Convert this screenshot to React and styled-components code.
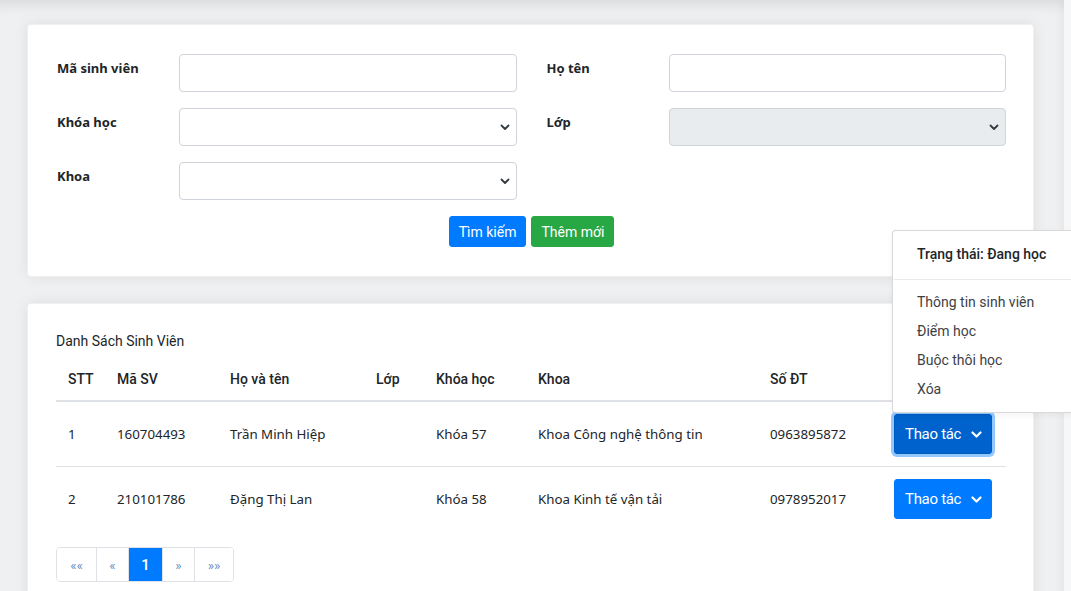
import React from 'react';
import styled, { createGlobalStyle, css } from 'styled-components';

const GlobalStyle = createGlobalStyle`
  html, body {
    margin: 0;
    padding: 0;
    background: #eff0f1;
    overflow: hidden;
  }
  body {
    font-family: Roboto, "Noto Sans", sans-serif;
    color: #212529;
  }
  * { box-sizing: border-box; }
`;

const Page = styled.div`
  display: flex;
  min-height: 100vh;
`;

const Main = styled.main`
  flex: 1;
  padding: 24px 30px 0 27px;
  box-shadow: inset 0 16px 14px -12px rgba(0, 0, 0, 0.1);
`;

const RightStrip = styled.aside`
  width: 7px;
  flex: none;
  background: #f7f7f7;
  box-shadow: -3px 0 8px rgba(0, 0, 0, 0.05);
`;

const Card = styled.section`
  background: #fff;
  border: 1px solid rgba(0, 0, 0, 0.06);
  border-radius: 4px;
  box-shadow: 0 0 14px rgba(0, 0, 0, 0.08);
  padding: ${p => p.$pad};
  & + & {
    margin-top: 26px;
  }
`;

const FormGrid = styled.div`
  display: grid;
  grid-template-columns: 1fr 1fr;
  column-gap: 30px;
  row-gap: 16px;
`;

const Field = styled.div`
  display: flex;
  align-items: flex-start;
`;

const Label = styled.label`
  width: 122px;
  flex: none;
  padding-top: 4px;
  font-family: "Noto Sans", sans-serif;
  font-weight: 700;
  font-size: 13px;
  line-height: 20px;
  color: #212529;
`;

const boxBase = css`
  flex: 1;
  height: 38px;
  border: 1px solid #ced4da;
  border-radius: 4px;
  background: ${p => (p.$disabled ? '#e9ecef' : '#fff')};
`;

const Input = styled.input`
  ${boxBase};
  outline: none;
  padding: 6px 12px;
  font-size: 14px;
`;

const SelectBox = styled.div`
  ${boxBase};
  display: flex;
  align-items: center;
  justify-content: flex-end;
  padding-right: 6px;
  color: #343a40;
`;

const Actions = styled.div`
  display: flex;
  justify-content: center;
  gap: 5px;
  margin-top: 16px;
`;

const Button = styled.button`
  height: 31px;
  padding: 0 9px;
  border: 1px solid ${p => p.$bg};
  border-radius: 3px;
  background: ${p => p.$bg};
  color: #fff;
  font-family: Roboto, sans-serif;
  font-size: 14px;
`;

const Title = styled.h2`
  margin: 0 0 6px;
  font-family: Roboto, sans-serif;
  font-weight: 400;
  font-size: 14px;
  line-height: 20px;
  color: #212529;
`;

const Table = styled.table`
  width: 100%;
  border-collapse: collapse;
  table-layout: fixed;
`;

const Th = styled.th`
  width: ${p => p.$w || 'auto'};
  padding: 12px 12px 10px;
  text-align: left;
  font-family: Roboto, sans-serif;
  font-weight: 500;
  font-size: 14px;
  line-height: 21px;
  border-bottom: 2px solid #dee2e6;
`;

const Td = styled.td`
  padding: 12px;
  vertical-align: middle;
  font-family: "Noto Sans", sans-serif;
  font-size: 13.3px;
  line-height: 21px;
  color: #212529;
  border-bottom: 1px solid #dee2e6;
  white-space: nowrap;
`;

const Row = styled.tr`
  &:last-child td {
    border-bottom: none;
  }
`;

const ActionWrap = styled.div`
  position: relative;
  display: inline-block;
`;

const ActionButton = styled.button`
  display: inline-flex;
  align-items: center;
  gap: 10px;
  height: 40px;
  width: 98px;
  padding: 0 0 0 10px;
  border: 1px solid ${p => (p.$focused ? '#005cbf' : '#007bff')};
  border-radius: 3px;
  background: ${p => (p.$focused ? '#0062cc' : '#007bff')};
  box-shadow: ${p => (p.$focused ? '0 0 0 3px rgba(38, 143, 255, 0.5)' : 'none')};
  color: #fff;
  font-family: Roboto, sans-serif;
  font-size: 15px;
  letter-spacing: -0.3px;
`;

const Menu = styled.div`
  position: absolute;
  left: -2px;
  bottom: calc(100% + 1px);
  width: 200px;
  padding: 8px 0;
  background: #fff;
  border: 1px solid rgba(0, 0, 0, 0.15);
  border-radius: 4px;
  box-shadow: 0 2px 6px rgba(0, 0, 0, 0.05);
  z-index: 5;
`;

const MenuHeader = styled.div`
  padding: 5px 24px 14px;
  font-family: Roboto, sans-serif;
  font-weight: 500;
  font-size: 14px;
  line-height: 21px;
  color: #212529;
  border-bottom: 1px solid #e9ecef;
  margin-bottom: 8px;
`;

const MenuItem = styled.div`
  padding: 0 24px;
  font-family: Roboto, sans-serif;
  font-size: 14px;
  line-height: 29px;
  color: #3d4145;
`;

const Pagination = styled.nav`
  display: inline-flex;
  margin-top: 16px;
  border: 1px solid #dee2e6;
  border-radius: 4px;
  overflow: hidden;
`;

const PageItem = styled.span`
  width: ${p => p.$w}px;
  height: 33px;
  display: flex;
  align-items: center;
  justify-content: center;
  font-family: Roboto, sans-serif;
  font-size: ${p => (p.$active ? '15px' : '13.5px')};
  font-weight: ${p => (p.$active ? 500 : 400)};
  color: ${p => (p.$active ? '#fff' : '#6a90c4')};
  background: ${p => (p.$active ? '#007bff' : '#fff')};
  & + & {
    border-left: 1px solid #dee2e6;
  }
`;

const SelectChevron = () => (
  <svg width="10" height="7" viewBox="0 0 10 7" fill="none">
    <path d="M1.5 1.5L5 5L8.5 1.5" stroke="currentColor" strokeWidth="1.8" strokeLinecap="round" strokeLinejoin="round" />
  </svg>
);

const ButtonChevron = () => (
  <svg width="11" height="7" viewBox="0 0 11 7" fill="none">
    <path d="M1.5 1.5L5.5 5.5L9.5 1.5" stroke="#fff" strokeWidth="2.2" strokeLinecap="round" strokeLinejoin="round" />
  </svg>
);

const students = [
  { stt: 1, id: '160704493', name: 'Trần Minh Hiệp', lop: '', course: 'Khóa 57', dept: 'Khoa Công nghệ thông tin', phone: '0963895872', open: true },
  { stt: 2, id: '210101786', name: 'Đặng Thị Lan', lop: '', course: 'Khóa 58', dept: 'Khoa Kinh tế vận tải', phone: '0978952017', open: false },
];

const menuItems = ['Thông tin sinh viên', 'Điểm học', 'Buộc thôi học', 'Xóa'];

const pages = [
  { label: '««', w: 39 },
  { label: '«', w: 32 },
  { label: '1', w: 34, active: true },
  { label: '»', w: 32 },
  { label: '»»', w: 39 },
];

export default function App() {
  return (
    <>
      <GlobalStyle />
      <Page>
        <Main>
          <Card $pad="29px 27px 29px 29px">
            <FormGrid>
              <Field>
                <Label>Mã sinh viên</Label>
                <Input />
              </Field>
              <Field>
                <Label>Họ tên</Label>
                <Input />
              </Field>
              <Field>
                <Label>Khóa học</Label>
                <SelectBox><SelectChevron /></SelectBox>
              </Field>
              <Field>
                <Label>Lớp</Label>
                <SelectBox $disabled><SelectChevron /></SelectBox>
              </Field>
              <Field>
                <Label>Khoa</Label>
                <SelectBox><SelectChevron /></SelectBox>
              </Field>
            </FormGrid>
            <Actions>
              <Button $bg="#007bff">Tìm kiếm</Button>
              <Button $bg="#28a745">Thêm mới</Button>
            </Actions>
          </Card>

          <Card $pad="27px 27px 40px 28px">
            <Title>Danh Sách Sinh Viên</Title>
            <Table>
              <thead>
                <tr>
                  <Th $w="49px">STT</Th>
                  <Th $w="113px">Mã SV</Th>
                  <Th $w="146px">Họ và tên</Th>
                  <Th $w="60px">Lớp</Th>
                  <Th $w="102px">Khóa học</Th>
                  <Th $w="232px">Khoa</Th>
                  <Th $w="124px">Số ĐT</Th>
                  <Th></Th>
                </tr>
              </thead>
              <tbody>
                {students.map(s => (
                  <Row key={s.id}>
                    <Td>{s.stt}</Td>
                    <Td>{s.id}</Td>
                    <Td>{s.name}</Td>
                    <Td>{s.lop}</Td>
                    <Td>{s.course}</Td>
                    <Td>{s.dept}</Td>
                    <Td>{s.phone}</Td>
                    <Td>
                      <ActionWrap>
                        <ActionButton $focused={s.open}>
                          Thao tác <ButtonChevron />
                        </ActionButton>
                        {s.open && (
                          <Menu>
                            <MenuHeader>Trạng thái: Đang học</MenuHeader>
                            {menuItems.map(m => (
                              <MenuItem key={m}>{m}</MenuItem>
                            ))}
                          </Menu>
                        )}
                      </ActionWrap>
                    </Td>
                  </Row>
                ))}
              </tbody>
            </Table>
            <Pagination>
              {pages.map(p => (
                <PageItem key={p.label} $w={p.w} $active={p.active}>{p.label}</PageItem>
              ))}
            </Pagination>
          </Card>
        </Main>
        <RightStrip />
      </Page>
    </>
  );
}
